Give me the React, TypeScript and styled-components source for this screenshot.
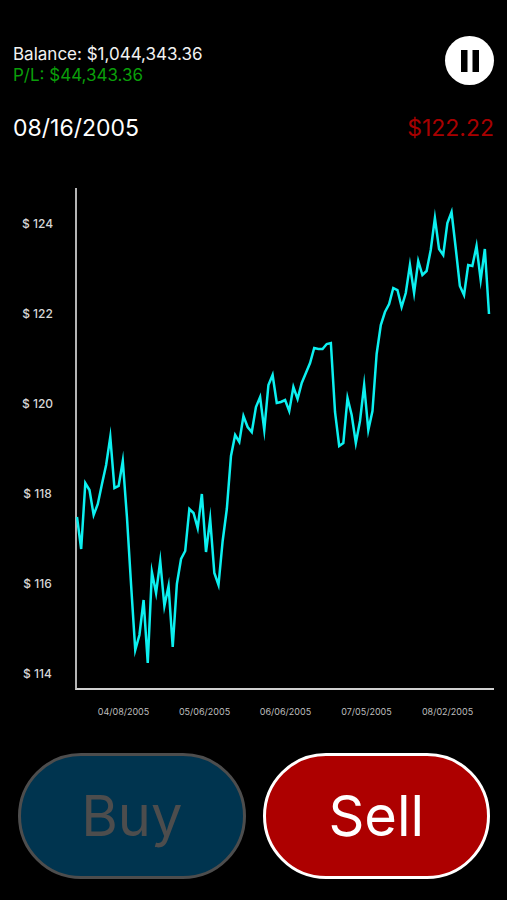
import React from 'react';
import styled, { createGlobalStyle } from 'styled-components';

const GlobalStyle = createGlobalStyle`
  *, *::before, *::after { box-sizing: border-box; }
  body {
    margin: 0;
    background: #000;
    color: #fff;
    font-family: Inter, "Liberation Sans", sans-serif;
  }
`;

const Screen = styled.main`
  display: flex;
  flex-direction: column;
  min-height: 100vh;
  padding: 36px 13px 21px;
`;

const Header = styled.header`
  display: flex;
  justify-content: space-between;
  align-items: flex-start;
`;

const Account = styled.div`
  padding-top: 8px;
  font-size: 17px;
  line-height: 21px;
`;

const AccountLine = styled.p<{ $gain?: boolean }>`
  margin: 0;
  color: ${({ $gain }) => ($gain ? '#0a9e0a' : '#f2f2f2')};
`;

const PauseButton = styled.button`
  display: grid;
  place-items: center;
  width: 49px;
  height: 49px;
  padding: 0;
  border: 0;
  border-radius: 50%;
  background: #fff;
  cursor: pointer;
`;

const Quote = styled.div`
  display: flex;
  justify-content: space-between;
  margin-top: 26px;
  font-size: 23px;
  line-height: 32px;
`;

const Price = styled.span`
  color: #a80000;
`;

const Chart = styled.figure`
  display: grid;
  grid-template-columns: 62px 1fr;
  margin: 44px 0 0;
`;

const PriceAxis = styled.div`
  display: flex;
  flex-direction: column;
  justify-content: space-between;
  padding: 28px 13px 8px 0;
  color: #d6d6d6;
  font-size: 12px;
  font-weight: 500;
  line-height: 16px;
  text-align: center;
`;

const Plot = styled.svg`
  display: block;
  width: 100%;
  height: 502px;
  border-left: 2px solid #b4b4b4;
  border-bottom: 2px solid #d0d0d0;
  overflow: visible;
`;

const DateAxis = styled.div`
  display: grid;
  grid-column: 2;
  grid-template-columns: repeat(5, 1fr);
  padding: 16px 6px 0 8px;
  color: #bdbdbd;
  font-size: 9px;
  line-height: 12px;
  text-align: center;
`;

const Actions = styled.div`
  display: grid;
  grid-template-columns: 1fr 1fr;
  gap: 17px;
  margin-top: 35px;
  padding: 0 4px 0 5px;
`;

const TradeButton = styled.button<{ $fill: string }>`
  height: 126px;
  padding: 0;
  border: 3px solid #fff;
  border-radius: 63px;
  background: ${({ $fill }) => $fill};
  color: #fff;
  font-family: inherit;
  font-size: 56px;
  line-height: 72px;
  cursor: pointer;

  &:disabled {
    border-color: #4d4d4d;
    color: #4d4d4d;
    cursor: default;
  }
`;

const priceTicks = [124, 122, 120, 118, 116, 114];
const dateTicks = ['04/08/2005', '05/06/2005', '06/06/2005', '07/05/2005', '08/02/2005'];

// Distance of each closing price below the top of the plot; 45 units are one dollar.
const closes = [
  329, 361, 295, 302, 327, 316, 296, 277, 249, 300, 298, 273, 329, 397, 462, 447, 412, 475, 384, 405,
  373, 418, 398, 459, 396, 371, 363, 321, 325, 340, 306, 364, 331, 385, 397, 353, 321, 268, 247, 254,
  228, 239, 244, 219, 209, 242, 197, 187, 215, 214, 212, 223, 199, 211, 195, 185, 175, 160, 161, 161,
  156, 155, 224, 258, 255, 210, 227, 255, 233, 197, 242, 223, 166, 137, 124, 116, 100, 102, 119, 105,
  77, 105, 73, 87, 83, 62, 30, 61, 67, 35, 24, 60, 98, 107, 77, 78, 58, 92, 61, 126,
];
const step = 412 / (closes.length - 1);
const line = closes.map((y, i) => `${(i * step).toFixed(2)},${y}`).join(' ');

export default function App() {
  return (
    <>
      <GlobalStyle />
      <Screen>
        <Header>
          <Account>
            <AccountLine>Balance: $1,044,343.36</AccountLine>
            <AccountLine $gain>P/L: $44,343.36</AccountLine>
          </Account>
          <PauseButton type="button" aria-label="Pause">
            <svg width="21" height="24" viewBox="0 0 21 24" aria-hidden="true">
              <rect x="2" y="1" width="6.5" height="22" />
              <rect x="13.5" y="1" width="6.5" height="22" />
            </svg>
          </PauseButton>
        </Header>
        <Quote>
          <time dateTime="2005-08-16">08/16/2005</time>
          <Price>$122.22</Price>
        </Quote>
        <Chart>
          <PriceAxis>
            {priceTicks.map((tick) => (
              <span key={tick}>$ {tick}</span>
            ))}
          </PriceAxis>
          <Plot viewBox="0 0 417 500" preserveAspectRatio="none" role="img" aria-label="Price history">
            <polyline
              points={line}
              fill="none"
              stroke="#0cf0f0"
              strokeWidth="2.5"
              strokeMiterlimit="10"
              vectorEffect="non-scaling-stroke"
            />
          </Plot>
          <DateAxis>
            {dateTicks.map((tick) => (
              <span key={tick}>{tick}</span>
            ))}
          </DateAxis>
        </Chart>
        <Actions>
          <TradeButton type="button" $fill="#00344f" disabled>
            Buy
          </TradeButton>
          <TradeButton type="button" $fill="#ad0000">
            Sell
          </TradeButton>
        </Actions>
      </Screen>
    </>
  );
}
